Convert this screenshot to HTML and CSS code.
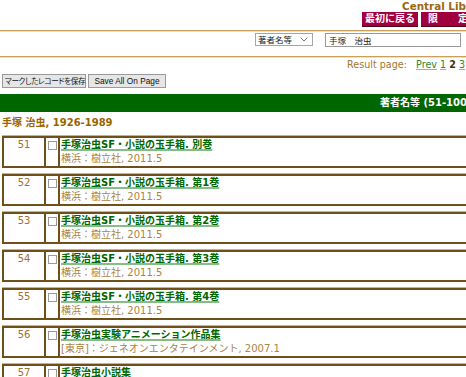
FILE: index.html
```html
<!DOCTYPE html>
<html lang="ja">
<head>
<meta charset="utf-8">
<title>Central Library</title>
<link rel="stylesheet" href="styles.css">
</head>
<body>
<div class="page">
  <header class="top">
    <div class="brand">Central Library</div>
    <nav class="navbtns">
      <a class="navbtn">最初に戻る</a>
      <a class="navbtn">限　　定</a>
    </nav>
  </header>
  <form class="search">
    <div class="select"><span>著者名等</span><svg class="chev" width="8" height="5" viewBox="0 0 8 5"><path d="M0.5 0.5 L4 4 L7.5 0.5" fill="none" stroke="#777" stroke-width="1"/></svg></div>
    <input class="query" type="text" value="手塚　治虫">
  </form>
  <div class="pager">Result page:&nbsp;&nbsp; <a class="plink">Prev</a> <a class="plink">1</a> <b class="pcur">2</b> <a class="plink">3</a> <a class="plink">4</a> <a class="plink">Next</a></div>
  <div class="saves">
    <button class="savebtn jp" type="button">マークしたレコードを保存</button>
    <button class="savebtn en" type="button">Save All On Page</button>
  </div>
  <div class="bar">著者名等 (51-100 of 253)</div>
  <h2 class="author">手塚 治虫, 1926-1989</h2>
  <div class="entries">
    <div class="entry"><div class="num">51</div><div class="mark"><span class="box"></span></div><div class="cit"><a class="title">手塚治虫SF・小説の玉手箱. 別巻</a><div class="pub">横浜：樹立社, 2011.5</div></div></div>
    <div class="entry"><div class="num">52</div><div class="mark"><span class="box"></span></div><div class="cit"><a class="title">手塚治虫SF・小説の玉手箱. 第1巻</a><div class="pub">横浜：樹立社, 2011.5</div></div></div>
    <div class="entry"><div class="num">53</div><div class="mark"><span class="box"></span></div><div class="cit"><a class="title">手塚治虫SF・小説の玉手箱. 第2巻</a><div class="pub">横浜：樹立社, 2011.5</div></div></div>
    <div class="entry"><div class="num">54</div><div class="mark"><span class="box"></span></div><div class="cit"><a class="title">手塚治虫SF・小説の玉手箱. 第3巻</a><div class="pub">横浜：樹立社, 2011.5</div></div></div>
    <div class="entry"><div class="num">55</div><div class="mark"><span class="box"></span></div><div class="cit"><a class="title">手塚治虫SF・小説の玉手箱. 第4巻</a><div class="pub">横浜：樹立社, 2011.5</div></div></div>
    <div class="entry"><div class="num">56</div><div class="mark"><span class="box"></span></div><div class="cit"><a class="title">手塚治虫実験アニメーション作品集</a><div class="pub">[東京]：ジェネオンエンタテインメント, 2007.1</div></div></div>
    <div class="entry"><div class="num">57</div><div class="mark"><span class="box"></span></div><div class="cit"><a class="title">手塚治虫小説集</a><div class="pub">東京：筑摩書房, 1994.7</div></div></div>
  </div>
</div>
</body>
</html>
```
FILE: styles.css
```css
html, body {
  margin: 0;
  padding: 0;
  overflow: hidden;
  background: #ffffff;
}
body {
  font-family: "DejaVu Sans", "Noto Sans CJK JP", sans-serif;
  font-size: 10px;
}
.page {
  width: 640px;
}
.top {
  height: 30px;
}
.brand {
  height: 12px;
  line-height: 12px;
  padding-left: 402px;
  font-size: 10.4px;
  font-weight: bold;
  color: #9a6810;
  white-space: nowrap;
}
.navbtns {
  display: flex;
  gap: 3px;
  padding-left: 362px;
  height: 15px;
}
.navbtn {
  display: block;
  height: 14px;
  line-height: 14px;
  padding: 0 3px 0 3px;
  background: #a0003c;
  border-bottom: 1px solid #4d001c;
  color: #ffffff;
  font-weight: bold;
  font-size: 10px;
  white-space: nowrap;
}
.navbtn + .navbtn {
  padding: 0 7px;
  min-width: 60px;
}
.search {
  margin: 0;
  border-top: 1px solid #c9a05a;
  border-bottom: 1px solid #c9a05a;
  box-shadow: inset 0 1px 0 #eedfc4, 0 1px 0 #eedfc4;
  height: 24px;
  padding-top: 1px;
  display: flex;
  align-items: flex-start;
}
.select {
  margin-left: 255px;
  margin-top: 1px;
  height: 11px;
  border: 1px solid #a5a5a5;
  display: flex;
  align-items: center;
  justify-content: space-between;
  padding: 0 4px 0 2px;
  box-sizing: content-box;
  width: 50px;
  font-family: "Noto Sans CJK JP", sans-serif;
  font-size: 8.5px;
  line-height: 11px;
  color: #222;
}
.chev {
  display: block;
}
.query {
  margin-left: 12px;
  margin-top: 1px;
  width: 128px;
  height: 12px;
  padding: 0 3px;
  border: 1px solid #999999;
  font-family: "Noto Sans CJK JP", sans-serif;
  font-size: 8.5px;
  line-height: 12px;
  color: #222;
  outline: none;
}
.pager {
  margin-top: 1px;
  height: 14px;
  line-height: 14px;
  padding-left: 347px;
  font-size: 9.6px;
  color: #a07630;
  white-space: nowrap;
}
.plink {
  color: #2f842f;
  text-decoration: underline;
  text-decoration-color: #8cc08c;
}
.pcur {
  color: #4a3008;
}
.saves {
  display: flex;
  gap: 2px;
  padding-left: 2px;
  margin-top: 2px;
  height: 14px;
}
.savebtn {
  margin: 0;
  height: 14px;
  padding: 0 2px;
  border: 1px solid #9a9a9a;
  background: #e6e6e6;
  line-height: 12px;
  color: #111;
  white-space: nowrap;
}
.savebtn.jp {
  width: 84px;
  font-family: "Noto Sans CJK JP", sans-serif;
  font-size: 7.6px;
  letter-spacing: -0.35px;
  font-feature-settings: "palt";
}
.savebtn.en {
  width: 78px;
  font-family: "Liberation Sans", sans-serif;
  font-size: 8.3px;
}
.bar {
  margin-top: 6px;
  height: 18px;
  line-height: 18px;
  background: #006600;
  color: #ffffff;
  font-weight: bold;
  font-size: 10px;
  padding-left: 380px;
  white-space: nowrap;
}
.author {
  margin: 4px 0 0 2px;
  height: 14px;
  line-height: 14px;
  font-size: 10px;
  font-weight: bold;
  color: #9a6400;
}
.entries {
  margin-top: 6px;
}
.entry {
  display: flex;
  margin: 0 0 6px 2px;
  height: 28px;
  border: 2px solid #6f5018;
  box-shadow: 0 -1px 0 0 #c9b38a;
  line-height: 14px;
}
.num {
  width: 40px;
  flex: none;
  border-right: 2px solid #6f5018;
  text-align: center;
  color: #a0702c;
}
.mark {
  width: 12px;
  flex: none;
  border-right: 2px solid #6f5018;
}
.box {
  display: block;
  width: 7px;
  height: 7px;
  margin: 3px 0 0 2px;
  border: 1px solid #9a9a9a;
  background: #fff;
}
.cit {
  flex: 1;
  padding-left: 1px;
  white-space: nowrap;
}
.title {
  display: inline-block;
  font-weight: bold;
  color: #006600;
  text-decoration: underline;
  text-decoration-color: #86bd86;
  text-decoration-thickness: 2px;
  text-underline-offset: 1px;
}
.pub {
  color: #aa8444;
}
```
